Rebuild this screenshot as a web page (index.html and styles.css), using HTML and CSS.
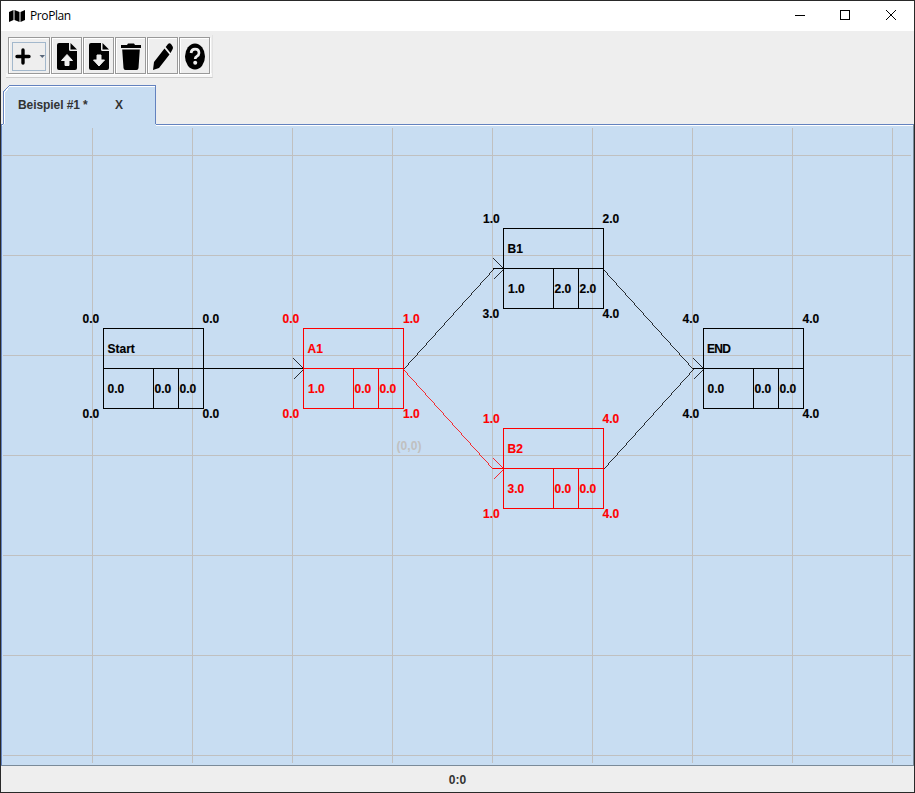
FILE: index.html
```
<!DOCTYPE html>
<html lang="de">
<head>
<meta charset="utf-8">
<title>ProPlan</title>
<link rel="stylesheet" href="styles.css">
</head>
<body>
<div class="window">
  <header class="titlebar">
    <svg class="logo" width="16" height="12" viewBox="0 0 16 12"><path d="M0 2L4.5 0V10L0 12ZM5.5 0L10.5 2V12L5.5 10ZM11.5 2L16 0V10L11.5 12Z"/></svg>
    <span class="title">ProPlan</span>
    <div class="controls">
      <svg width="45" height="29" shape-rendering="crispEdges"><path d="M14 14.5H24"/></svg>
      <svg width="46" height="29" shape-rendering="crispEdges"><rect x="14.5" y="9.5" width="9" height="9"/></svg>
      <svg width="41" height="29"><path d="M14 9L24 19M24 9L14 19"/></svg>
    </div>
  </header>
  <div class="toolrow">
    <div class="toolbar">
      <button class="tool add"><span class="add-inner">
        <svg width="32" height="27" viewBox="0 0 32 27"><path d="M10 7V20M4 13.5H16" fill="none" stroke="#000" stroke-width="3.4" stroke-linecap="round"/><path d="M26.5 12H32L29.3 15Z" fill="#58677a"/></svg>
      </span></button>
      <button class="tool"><svg width="20" height="27" viewBox="0 0 20 27"><path d="M2 0H12V6.5Q12 8 13.5 8H20V25Q20 27 18 27H2Q0 27 0 25V2Q0 0 2 0Z"/><path d="M13.5 0L20 6.5H13.5Z"/><path d="M10 11.5L15.500 17.500H12V22.500H8V17.500H4.500Z" fill="#eee" stroke="#eee" stroke-linejoin="round"/></svg></button>
      <button class="tool"><svg width="20" height="27" viewBox="0 0 20 27"><path d="M2 0H12V6.5Q12 8 13.5 8H20V25Q20 27 18 27H2Q0 27 0 25V2Q0 0 2 0Z"/><path d="M13.5 0L20 6.5H13.5Z"/><path d="M10 23L15.500 17H12V12H8V17H4.500Z" fill="#eee" stroke="#eee" stroke-linejoin="round"/></svg></button>
      <button class="tool"><svg width="20" height="27" viewBox="0 0 20 27"><path d="M0 2H6L7 .5H13L14 2H20V5H0ZM1.2 6.5H18.8L17.5 25Q17.3 27 15.5 27H4.5Q2.7 27 2.5 25Z"/></svg></button>
      <button class="tool"><svg width="20" height="27" viewBox="0 0 20 27"><path d="M11.5 5.5L16.5 11.5L6 25L0 27L1 19ZM12.7 4L15 1Q16.5-.5 18 1L19.5 3.2Q20.5 4.8 19.3 6.7L17.5 10Z"/></svg></button>
      <button class="tool"><svg width="20" height="27" viewBox="0 0 20 27"><ellipse cx="10" cy="13.5" rx="10" ry="13"/><path d="M6 10Q6.5 6.2 10 6.2Q14 6.2 14 10Q14 12 11.8 13.3Q10.2 14.2 10.2 16" fill="none" stroke="#eee" stroke-width="2.7"/><circle cx="10.2" cy="19.8" r="2" fill="#eee"/></svg></button>
    </div>
  </div>
  <div class="tabs">
    <svg class="tabshape" width="155" height="41" shape-rendering="crispEdges"><path d="M2 40V7L8 1H155V41H2Z" fill="#c8ddf2"/><path d="M3.5 39V7.500L8.500 1.500H154" fill="none" stroke="#fff"/><path d="M2.500 39V6.500L8.500 .5H154.500V39" fill="none" stroke="#6382bf"/></svg>
    <span class="tab-name">Beispiel #1 *</span><span class="tab-close">X</span>
  </div>
  <main class="panel">
    <svg class="plan" viewBox="2 126 911 639" width="911" height="639">
      <defs>
        <g id="box"><path d="M.5 .5H100.500V80.500H.5ZM.5 40.500H100.500M50.500 40.500V80.500M75.500 40.500V80.500"/></g>
        <path id="arrow" class="slant" d="M-10 -10L.5 .5L-10 11"/>
      </defs>
      <path class="grid" d="M92.500 128V763M192.500 128V763M292.500 128V763M392.500 128V763M492.500 128V763M592.500 128V763M692.500 128V763M792.500 128V763M892.500 128V763M3 155.500H911M3 255.500H911M3 355.500H911M3 455.500H911M3 555.500H911M3 655.500H911M3 755.500H911"/>
      <text class="coord" x="396.5" y="450" textLength="25">(0,0)</text>
      <g class="lines">
        <path d="M203.500 368.500H303.500M493 268.500H503.500M693 368.500H703.500"/>
        <path class="slant" d="M403.500 368.500L493.500 268.500M603.500 268.500L693.500 368.500M603.500 468.500L693.500 368.500"/>
        <use href="#arrow" x="303" y="368"/><use href="#arrow" x="503" y="268"/><use href="#arrow" x="703" y="368"/>
        <use href="#box" x="103" y="328"/><use href="#box" x="503" y="228"/><use href="#box" x="703" y="328"/>
      </g>
      <g class="lines critical">
        <path d="M493 468.500H503.500"/><path class="slant" d="M403.500 368.500L493.500 468.500"/><use href="#arrow" x="503" y="468"/>
        <use href="#box" x="303" y="328"/><use href="#box" x="503" y="428"/>
      </g>
      <g class="labels">
        <text x="82.500" y="323">0.0</text><text x="202.500" y="323">0.0</text><text x="107.500" y="353">Start</text><text x="107.500" y="393">0.0</text><text x="154.500" y="393">0.0</text><text x="179.500" y="393">0.0</text><text x="82.500" y="418">0.0</text><text x="202.500" y="418">0.0</text>
        <text x="483" y="223">1.0</text><text x="602.500" y="223">2.0</text><text x="507.500" y="253">B1</text><text x="508" y="293">1.0</text><text x="554.500" y="293">2.0</text><text x="579.500" y="293">2.0</text><text x="482.500" y="318">3.0</text><text x="602.500" y="318">4.0</text>
        <text x="682.500" y="323">4.0</text><text x="802.500" y="323">4.0</text><text x="707" y="353" textLength="24">END</text><text x="707.500" y="393">0.0</text><text x="754.500" y="393">0.0</text><text x="779.500" y="393">0.0</text><text x="682.500" y="418">4.0</text><text x="802.500" y="418">4.0</text>
      </g>
      <g class="labels critical">
        <text x="282.500" y="323">0.0</text><text x="403" y="323">1.0</text><text x="307.500" y="353">A1</text><text x="308" y="393">1.0</text><text x="354.500" y="393">0.0</text><text x="379.500" y="393">0.0</text><text x="282.500" y="418">0.0</text><text x="403" y="418">1.0</text>
        <text x="483" y="423">1.0</text><text x="602.500" y="423">4.0</text><text x="507.500" y="453">B2</text><text x="507.500" y="493">3.0</text><text x="554.500" y="493">0.0</text><text x="579.500" y="493">0.0</text><text x="483" y="518">1.0</text><text x="602.500" y="518">4.0</text>
      </g>
    </svg>
  </main>
  <footer class="status">0:0</footer>
</div>
</body>
</html>
```
FILE: styles.css
```
* { box-sizing: border-box; }
body { margin: 0; font: bold 12px "Liberation Sans", Arial, sans-serif; color: #333; }
svg { display: block; }
.window { width: 915px; height: 793px; border: 1px solid #292929; background: #eee; display: flex; flex-direction: column; overflow: hidden; }
.titlebar { height: 30px; flex: none; background: #fff; display: flex; align-items: center; padding-left: 8px; padding-bottom: 1px; color: #000; }
.title { margin-left: 5px; font: 12px "Open Sans", "Noto Sans", sans-serif; letter-spacing: -0.4px; }
.controls { display: flex; margin-left: auto; margin-right: 1px; }
.controls svg { fill: none; stroke: #000; stroke-width: 1; }
.toolrow { height: 54px; flex: none; padding: 4px 0 0 5px; }
.toolbar { display: flex; align-items: flex-start; width: 207px; height: 43px; gap: 1px; padding: 2px 0 0 2px; border-bottom: 1px solid #ccc; border-right: 1px solid #e2e2e2; background: linear-gradient(#eee 0 38px, #f8f8f8 38px); }
.tool { width: 31px; height: 37px; flex: none; padding: 1px 0 0; border: 1px solid #999; background: #eee; box-shadow: inset 1px 1px #fff, 1px 1px #fff; display: flex; align-items: center; justify-content: center; }
.add { width: 42px; }
.add-inner { width: 34px; height: 29px; border: 1px solid #a3b8cc; overflow: hidden; }
.tabs { height: 40px; flex: none; margin-bottom: -1px; display: flex; position: relative; z-index: 1; align-items: center; padding-left: 17px; }
.tabshape { position: absolute; left: 0; top: 0; }
.tab-name, .tab-close { position: relative; }
.tab-name { width: 97px; white-space: nowrap; letter-spacing: -0.08px; }
.panel { height: 642px; flex: none; border: 1px solid #7a8a99; border-top-color: #6382bf; border-left-color: #6382bf; background: #c8ddf2; box-shadow: inset 0 1px #fff; }
.plan { margin-top: 1px; }
.grid { stroke: #c0c0c0; fill: none; shape-rendering: crispEdges; }
.lines { stroke: #000; fill: none; shape-rendering: crispEdges; }
.slant { stroke-width: 0.8px; }
.labels { fill: #000; stroke: #000; stroke-width: 0.15px; }
.lines.critical { stroke: #f00; }
.labels.critical { fill: #f00; stroke: #f00; }
.coord { fill: #c0c0c0; }
.status { flex: 1; display: flex; align-items: center; justify-content: center; padding-top: 2px; }
```
